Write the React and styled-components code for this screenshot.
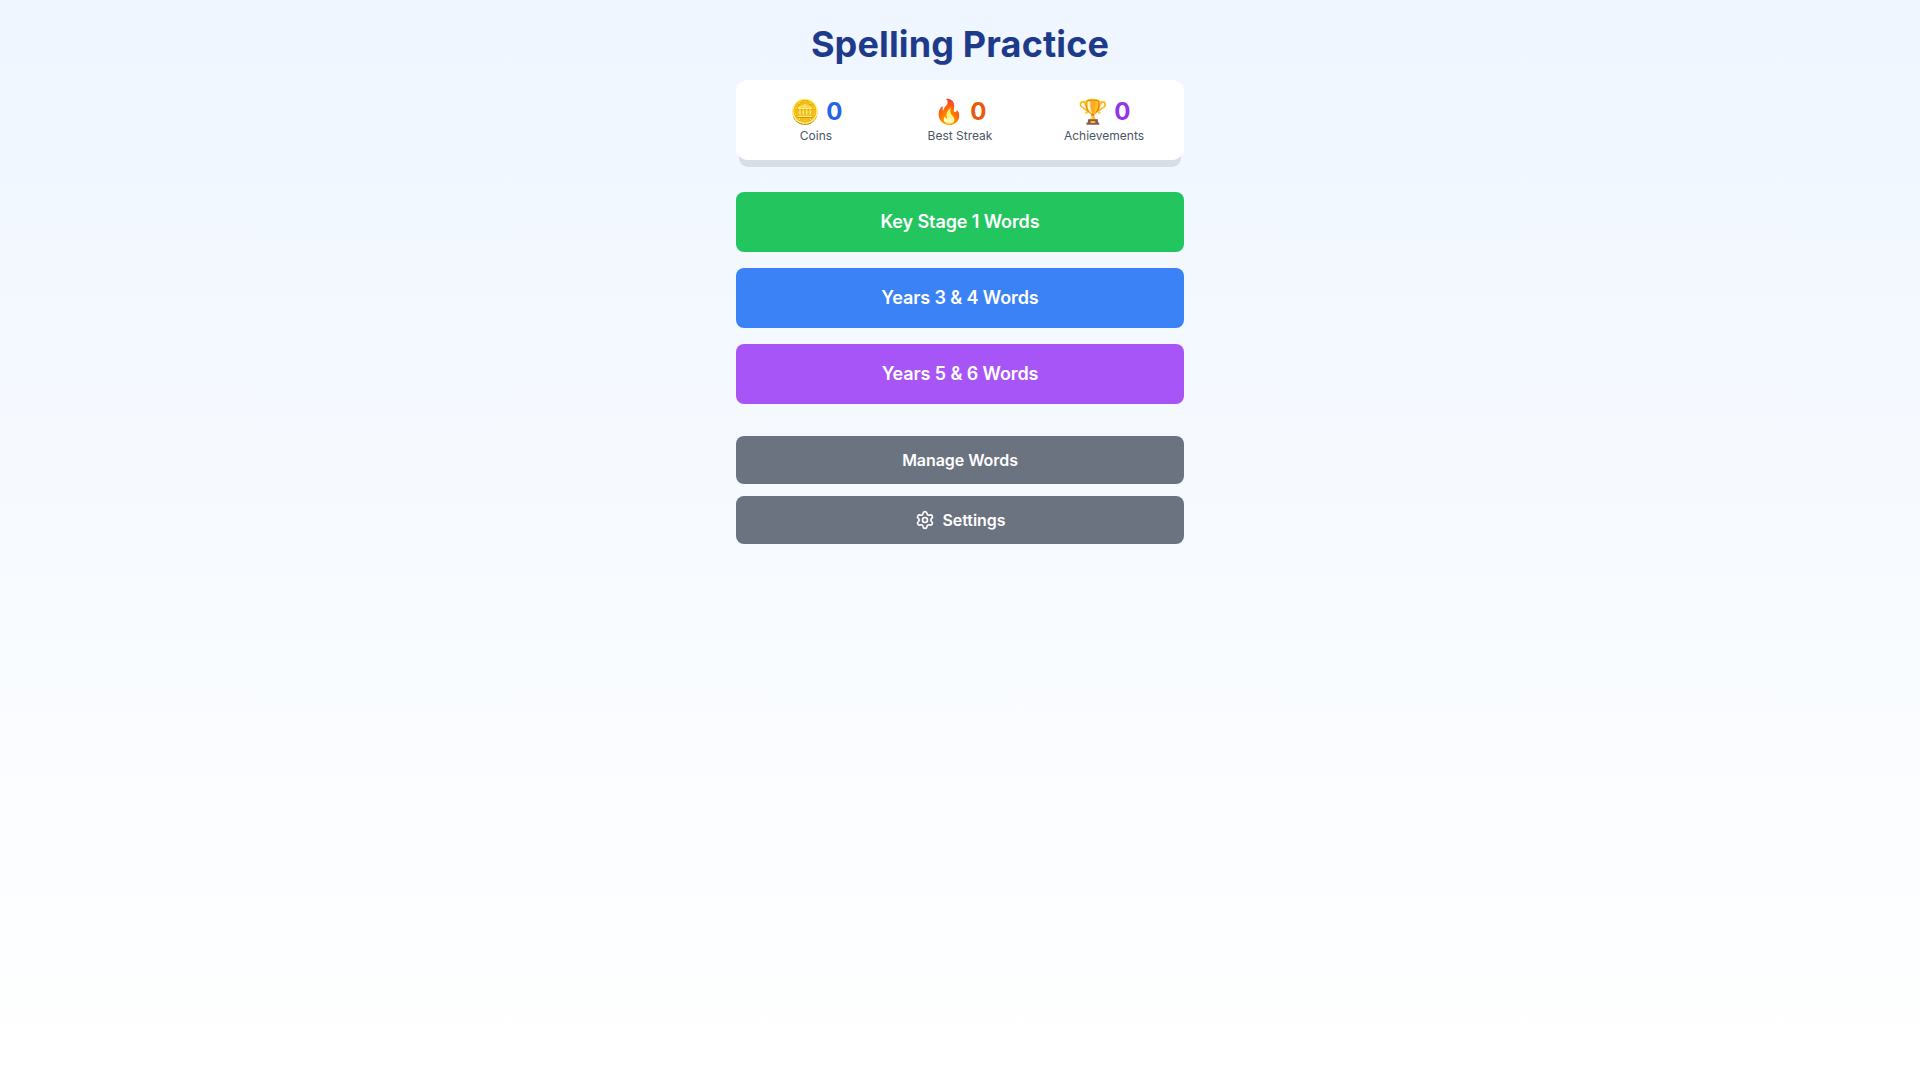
import React from 'react';
import styled, { createGlobalStyle } from 'styled-components';
import { Settings as SettingsIcon } from 'lucide-react';

const GlobalStyle = createGlobalStyle`
  * { box-sizing: border-box; }
  html, body { margin: 0; padding: 0; }
  body {
    font-family: Inter, "Noto Sans", sans-serif;
    line-height: 1.5;
  }
`;

const Page = styled.div`
  min-height: 100vh;
  padding: 24px;
  background: linear-gradient(to bottom, #eff6ff, #ffffff);
`;

const Column = styled.main`
  width: 448px;
  margin: 0 auto;
`;

const Title = styled.h1`
  margin: 0 0 16px;
  font-size: 36px;
  line-height: 40px;
  font-weight: 700;
  letter-spacing: 0.14px;
  text-align: center;
  color: #1e3a8a;
`;

const StatsCard = styled.section`
  display: grid;
  grid-template-columns: repeat(3, 1fr);
  gap: 16px;
  padding: 16px;
  margin-bottom: 32px;
  background: #fff;
  border-radius: 12px;
  box-shadow: 0 10px 0 -3px #d9dde6;
`;

const Stat = styled.div`
  text-align: center;
`;

const StatValue = styled.div`
  font-size: 24px;
  line-height: 32px;
  font-weight: 700;
  word-spacing: 1px;
  color: ${(p) => p.$color};
`;

const StatLabel = styled.div`
  font-size: 12px;
  line-height: 16px;
  color: #4b5563;
`;

const LevelList = styled.div`
  display: flex;
  flex-direction: column;
  gap: 16px;
  margin-bottom: 32px;
`;

const LevelButton = styled.button`
  height: 60px;
  border: 0;
  border-radius: 8px;
  font-family: inherit;
  font-size: 18px;
  line-height: 28px;
  font-weight: 600;
  letter-spacing: -0.1px;
  color: #fff;
  background: ${(p) => p.$bg};
`;

const ToolList = styled.div`
  display: flex;
  flex-direction: column;
  gap: 12px;
`;

const ToolButton = styled.button`
  display: flex;
  align-items: center;
  justify-content: center;
  gap: 8px;
  height: 48px;
  border: 0;
  border-radius: 8px;
  font-family: inherit;
  font-size: 16px;
  line-height: 24px;
  font-weight: 600;
  letter-spacing: -0.06px;
  color: #fff;
  background: #6b7280;
`;

const stats = [
  { icon: '🪙', label: 'Coins', color: '#2563eb' },
  { icon: '🔥', label: 'Best Streak', color: '#ea580c' },
  { icon: '🏆', label: 'Achievements', color: '#9333ea' },
];

const levels = [
  { label: 'Key Stage 1 Words', bg: '#22c55e' },
  { label: 'Years 3 & 4 Words', bg: '#3b82f6' },
  { label: 'Years 5 & 6 Words', bg: '#a855f7' },
];

export default function App() {
  return (
    <Page>
      <GlobalStyle />
      <Column>
        <Title>Spelling Practice</Title>
        <StatsCard>
          {stats.map((s) => (
            <Stat key={s.label}>
              <StatValue $color={s.color}>{s.icon} 0</StatValue>
              <StatLabel>{s.label}</StatLabel>
            </Stat>
          ))}
        </StatsCard>
        <LevelList>
          {levels.map((l) => (
            <LevelButton key={l.label} $bg={l.bg}>{l.label}</LevelButton>
          ))}
        </LevelList>
        <ToolList>
          <ToolButton>Manage Words</ToolButton>
          <ToolButton><SettingsIcon size={20} />Settings</ToolButton>
        </ToolList>
      </Column>
    </Page>
  );
}
